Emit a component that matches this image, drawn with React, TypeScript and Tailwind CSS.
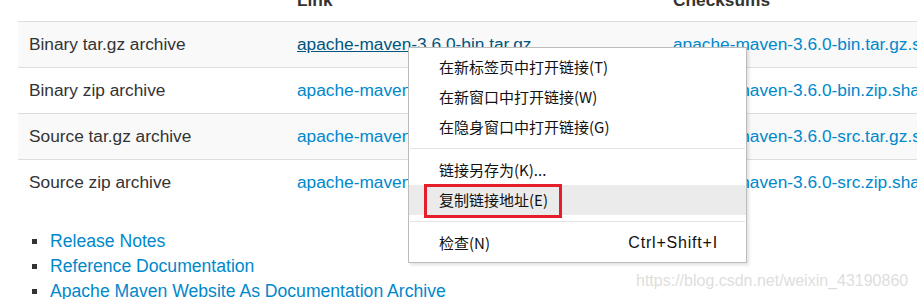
import React from 'react';

// 下载表格的数据
const rows = [
  { label: 'Binary tar.gz archive', file: 'apache-maven-3.6.0-bin.tar.gz', hover: true },
  { label: 'Binary zip archive', file: 'apache-maven-3.6.0-bin.zip' },
  { label: 'Source tar.gz archive', file: 'apache-maven-3.6.0-src.tar.gz' },
  { label: 'Source zip archive', file: 'apache-maven-3.6.0-src.zip' },
];

const links = ['Release Notes', 'Reference Documentation', 'Apache Maven Website As Documentation Archive'];

// 右键菜单项
type MenuItem = { text: string; shortcut?: string; active?: boolean } | 'sep';
const menu: MenuItem[] = [
  { text: '在新标签页中打开链接(T)' },
  { text: '在新窗口中打开链接(W)' },
  { text: '在隐身窗口中打开链接(G)' },
  'sep',
  { text: '链接另存为(K)...' },
  { text: '复制链接地址(E)', active: true },
  'sep',
  { text: '检查(N)', shortcut: 'Ctrl+Shift+I' },
];

const ContextMenu: React.FC = () => (
  <div
    className="absolute left-[408px] top-[47px] w-[339px] bg-white border border-[#bcbcbc] shadow-[2px_2px_3px_rgba(0,0,0,0.12)] py-1 text-[15px] text-[#111]"
    style={{ fontFamily: '"Noto Sans CJK SC", "Liberation Sans", sans-serif' }}
  >
    {menu.map((m, i) =>
      m === 'sep' ? (
        <div key={i} className="h-px bg-[#e3e3e3] mt-[6px] mb-[6px] mx-[1px]" />
      ) : (
        <div
          key={i}
          className={`relative h-[30px] flex items-center justify-between pl-[30px] pr-[28px] ${m.active ? 'bg-[#ebebeb]' : ''}`}
        >
          <span>{m.text}</span>
          {m.shortcut && (
            <span className="text-[16px] tracking-[0.8px]" style={{ fontFamily: '"Liberation Sans", sans-serif' }}>
              {m.shortcut}
            </span>
          )}
          {m.active && (
            <div className="absolute left-[15px] top-[-1px] w-[138px] h-[34px] border-[3px] border-[#e41e2b]" />
          )}
        </div>
      )
    )}
  </div>
);

export default function App() {
  return (
    <div
      className="relative w-[917px] h-[299px] overflow-hidden bg-white text-[#333] text-[17.3px]"
      style={{ fontFamily: '"Liberation Sans", Arial, sans-serif' }}
    >
      <div className="ml-[18px] w-[1000px] -mt-[17px]">
        {/* 表头 */}
        <div className="grid grid-cols-[268px_376px_1fr] h-[38px] pt-[6px] font-bold leading-[22px] whitespace-nowrap">
          <div className="pl-[11px]"></div>
          <div className="pl-[11px]">Link</div>
          <div className="pl-[11px]">Checksums</div>
        </div>
        {rows.map((r, i) => (
          <div
            key={r.file}
            className={`grid grid-cols-[268px_376px_1fr] h-[46px] items-center border-t border-[#dddddd] whitespace-nowrap ${i % 2 === 0 ? 'bg-[#f9f9f9]' : 'bg-white'}`}
          >
            <div className="pl-[11px]">{r.label}</div>
            <div className="pl-[11px]">
              <span className={r.hover ? 'text-[#005580] underline' : 'text-[#0088cc]'}>{r.file}</span>
            </div>
            <div className="pl-[11px] text-[#0088cc]">{r.file}.sha512</div>
          </div>
        ))}
      </div>

      <ul className="mt-[24px] ml-[32px] text-[17.6px]">
        {links.map((l) => (
          <li key={l} className="flex items-center h-[25px] whitespace-nowrap">
            <span className="w-[5px] h-[5px] bg-[#333] mr-[13px]" />
            <span className="text-[#0088cc]">{l}</span>
          </li>
        ))}
      </ul>

      <ContextMenu />

      <div className="absolute left-[636px] top-[269px] text-[16px] text-[#dedede] whitespace-nowrap">
        https://blog.csdn.net/weixin_43190860
      </div>
    </div>
  );
}
